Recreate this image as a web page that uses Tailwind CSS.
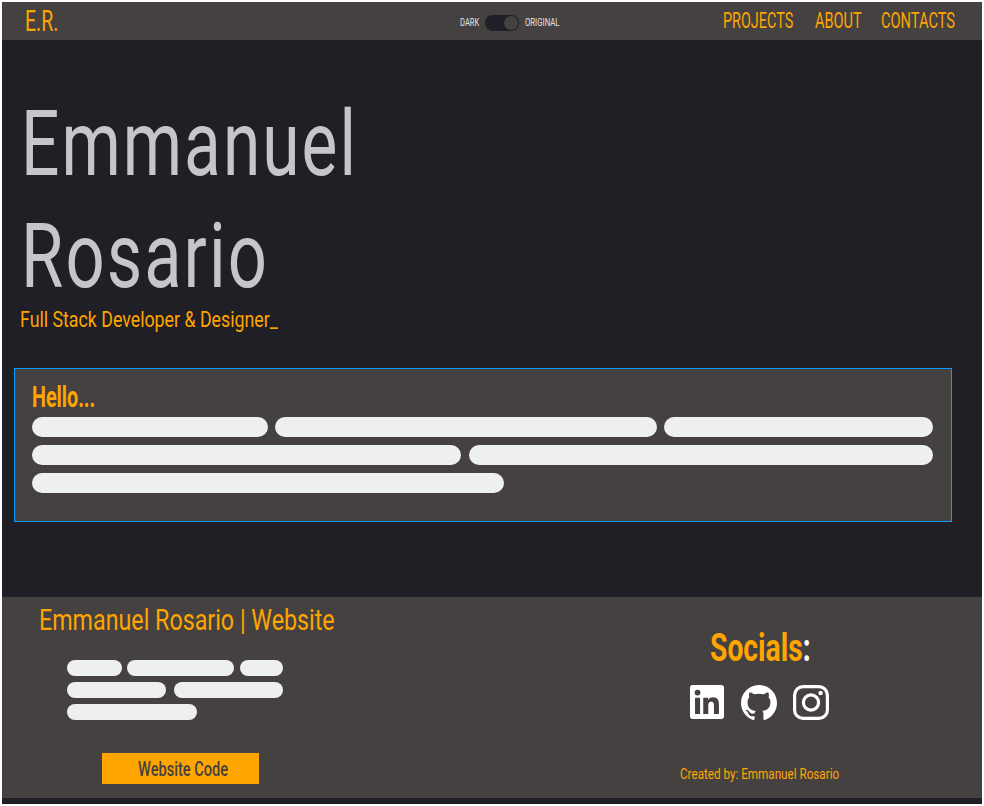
<!DOCTYPE html>
<html lang="en">
<head>
<meta charset="utf-8">
<title>Emmanuel Rosario</title>
<script src="https://cdn.jsdelivr.net/npm/@tailwindcss/browser@4"></script>
</head>
<body class="bg-white p-[2px] font-['Roboto',sans-serif]">
<div class="flex h-[802px] w-[980px] flex-col overflow-hidden bg-[#201f25] text-[#ffa500]">
  <nav class="flex h-[38px] shrink-0 whitespace-nowrap bg-[#454140]">
    <a class="ml-[23px] w-[435px] text-[29.5px] leading-[38px]"><span class="inline-block origin-left scale-x-[.66]">E.R.</span></a>
    <div class="flex h-[42px] w-[263px] items-center text-[11.5px] text-[#e2e2e4]">
      <span class="w-[25px]"><span class="inline-block origin-left scale-x-[.66]">DARK</span></span>
      <span class="flex h-4 w-[34px] shrink-0 items-center justify-end rounded-full bg-[#201f25] pr-px"><span class="size-[14px] rounded-full bg-[#454140]"></span></span>
      <span class="ml-[6px]"><span class="inline-block origin-left scale-x-[.675]">ORIGINAL</span></span>
    </div>
    <div class="flex text-[22.5px] leading-[37px]">
      <a class="w-[92px]"><span class="inline-block origin-left scale-x-[.64]">PROJECTS</span></a>
      <a class="w-[66px]"><span class="inline-block origin-left scale-x-[.645]">ABOUT</span></a>
      <a class="w-[80px]"><span class="inline-block origin-left scale-x-[.65]">CONTACTS</span></a>
    </div>
  </nav>
  <header class="shrink-0 whitespace-nowrap pt-12">
    <h1 class="pl-[19px] text-[91px] font-normal leading-[112px] text-[#c6c6ca]">
      <span class="block w-max origin-left scale-x-[.743] tracking-[.03em]">Emmanuel</span>
      <span class="block w-max origin-left scale-x-[.755] tracking-[.03em]">Rosario</span>
    </h1>
    <p class="ml-[17.5px] w-max origin-left scale-x-[.808] text-[22px] leading-4">Full Stack Developer &amp; Designer_</p>
  </header>
  <main class="ml-3 mt-10 h-[154px] w-[938px] shrink-0 border border-[#0a9bff] bg-[#454140] px-[17px] pt-2">
    <h2 class="w-max origin-left scale-x-[.68] text-[29px] font-bold leading-10">Hello...</h2>
    <div class="flex flex-col gap-2">
      <div class="flex h-5 gap-[7px]"><i class="w-[236px] rounded-full bg-[#eeeff1]"></i><i class="w-[382px] rounded-full bg-[#eeeff1]"></i><i class="w-[269px] rounded-full bg-[#eeeff1]"></i></div>
      <div class="flex h-5 gap-2"><i class="w-[429px] rounded-full bg-[#eeeff1]"></i><i class="w-[464px] rounded-full bg-[#eeeff1]"></i></div>
      <div class="flex h-5"><i class="w-[472px] rounded-full bg-[#eeeff1]"></i></div>
    </div>
  </main>
  <footer class="mt-[75px] flex h-[201px] shrink-0 whitespace-nowrap bg-[#454140]">
    <section class="w-[678px]">
      <h3 class="ml-[37px] w-max origin-left scale-x-[.802] text-[29px] leading-[46px]">Emmanuel Rosario | Website</h3>
      <div class="ml-[65px] mt-[16.7px] flex w-[216px] flex-col gap-[6px]">
        <div class="flex h-4 justify-between"><i class="w-[54.5px] rounded-full bg-[#eeeff1]"></i><i class="w-[107px] rounded-full bg-[#eeeff1]"></i><i class="w-[43px] rounded-full bg-[#eeeff1]"></i></div>
        <div class="flex h-4 justify-between"><i class="w-[99px] rounded-full bg-[#eeeff1]"></i><i class="w-[109px] rounded-full bg-[#eeeff1]"></i></div>
        <div class="flex h-4"><i class="w-[130px] rounded-full bg-[#eeeff1]"></i></div>
      </div>
      <button class="ml-[100px] mt-[33.5px] block h-[31px] w-[157px] bg-[#ffa500] pl-9 text-left text-[20px] font-medium leading-[33px] text-[#454140]"><span class="inline-block origin-left scale-x-[.73]">Website Code</span></button>
    </section>
    <section class="pt-7">
      <h3 class="ml-[30px] w-max origin-left scale-x-[.725] text-[39px] font-bold leading-[46px]">Socials<span class="text-white">:</span></h3>
      <div class="ml-[10px] mt-[14px] flex h-[36px] items-start text-white">
        <svg class="mr-[17px] h-[34px] w-[34px]" viewBox="0 0 24 24" fill="currentColor"><path d="M20.447 20.452h-3.554v-5.569c0-1.328-.027-3.037-1.852-3.037-1.853 0-2.136 1.445-2.136 2.939v5.667H9.351V9h3.414v1.561h.046c.477-.9 1.637-1.85 3.37-1.85 3.601 0 4.267 2.37 4.267 5.455v6.286zM5.337 7.433a2.062 2.062 0 1 1 0-4.125 2.062 2.062 0 0 1 0 4.125zm1.782 13.019H3.555V9h3.564v11.452zM22.225 0H1.771C.792 0 0 .774 0 1.729v20.542C0 23.227.792 24 1.771 24h20.451C23.2 24 24 23.227 24 22.271V1.729C24 .774 23.2 0 22.222 0h.003z"/></svg>
        <svg class="mr-4 h-[35px] w-[36px]" viewBox="0 .3 24 23.4" preserveAspectRatio="none" fill="currentColor"><path d="M12 .297c-6.63 0-12 5.373-12 12 0 5.303 3.438 9.8 8.205 11.385.6.113.82-.258.82-.577 0-.285-.01-1.04-.015-2.04-3.338.724-4.042-1.61-4.042-1.61C4.422 18.07 3.633 17.7 3.633 17.7c-1.087-.744.084-.729.084-.729 1.205.084 1.838 1.236 1.838 1.236 1.07 1.835 2.809 1.305 3.495.998.108-.776.417-1.305.76-1.605-2.665-.3-5.466-1.332-5.466-5.93 0-1.31.465-2.38 1.235-3.22-.135-.303-.54-1.523.105-3.176 0 0 1.005-.322 3.3 1.23.96-.267 1.98-.399 3-.405 1.02.006 2.04.138 3 .405 2.28-1.552 3.285-1.23 3.285-1.23.645 1.653.24 2.873.12 3.176.765.84 1.23 1.91 1.23 3.22 0 4.61-2.805 5.625-5.475 5.92.42.36.81 1.096.81 2.22 0 1.606-.015 2.896-.015 3.286 0 .315.21.69.825.57C20.565 22.092 24 17.592 24 12.297c0-6.627-5.373-12-12-12"/></svg>
        <svg class="h-[35px] w-[36px]" viewBox="0 0 36 35" fill="none" stroke="currentColor" stroke-width="3.2"><rect x="1.6" y="1.6" width="32.8" height="31.8" rx="8.5"/><circle cx="18" cy="17.5" r="7.6"/><circle cx="27.6" cy="8" r="2.2" fill="currentColor" stroke="none"/></svg>
      </div>
      <p class="mt-[44px] w-max origin-left scale-x-[.805] text-[14.5px] leading-5">Created by: Emmanuel Rosario</p>
    </section>
  </footer>
</div>
</body>
</html>
